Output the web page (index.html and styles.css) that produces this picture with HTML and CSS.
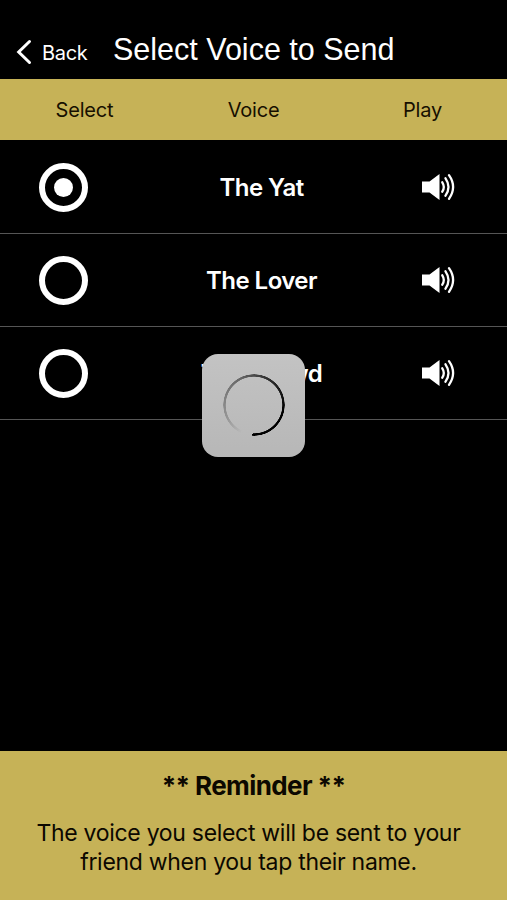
FILE: index.html
```html
<!DOCTYPE html>
<html lang="en">
<head>
<meta charset="utf-8">
<title>Select Voice to Send</title>
<link rel="stylesheet" href="styles.css">
</head>
<body>
<div class="app">
  <header class="navbar">
    <a class="back">
      <svg class="chevron" width="16" height="26" viewBox="0 0 16 26"><path d="M13.500 2.500 2.700 13 13.500 23.500"/></svg>
      <span class="back-label">Back</span>
    </a>
    <h1 class="title">Select Voice to Send</h1>
  </header>
  <div class="columns head">
    <span>Select</span><span>Voice</span><span>Play</span>
  </div>
  <main class="list">
    <div class="columns row">
      <span class="radio checked"></span>
      <span class="name">The Yat</span>
      <svg class="speaker" width="34" height="28" viewBox="0 0 34 28"><path class="cone" d="M1 8.500h7.500L18.500 1v26L8.500 19.500H1z"/><path class="wave" d="M21.300 9.300q3 4.700 0 9.400M24.500 5.300q6 8.700 0 17.400M28 2.200q8.200 11.800 0 23.600"/></svg>
    </div>
    <div class="columns row">
      <span class="radio"></span>
      <span class="name">The Lover</span>
      <svg class="speaker" width="34" height="28" viewBox="0 0 34 28"><path class="cone" d="M1 8.500h7.500L18.500 1v26L8.500 19.500H1z"/><path class="wave" d="M21.300 9.300q3 4.700 0 9.400M24.500 5.300q6 8.700 0 17.400M28 2.200q8.200 11.800 0 23.600"/></svg>
    </div>
    <div class="columns row">
      <span class="radio"></span>
      <span class="name">The Crowd</span>
      <svg class="speaker" width="34" height="28" viewBox="0 0 34 28"><path class="cone" d="M1 8.500h7.500L18.500 1v26L8.500 19.500H1z"/><path class="wave" d="M21.300 9.300q3 4.700 0 9.400M24.500 5.300q6 8.700 0 17.400M28 2.200q8.200 11.800 0 23.600"/></svg>
    </div>
  </main>
  <footer class="reminder">
    <h2 class="reminder-title">** Reminder **</h2>
    <p class="reminder-text">The voice you select will be sent to your<br>friend when you tap their name.</p>
  </footer>
  <div class="loading"><div class="ring"></div></div>
</div>
</body>
</html>
```

FILE: styles.css
```css
* { box-sizing: border-box; }
body { margin: 0; background: #000; font-family: Inter, "Liberation Sans", sans-serif; }
.app { position: relative; display: flex; flex-direction: column; height: 900px; overflow: hidden; }
.navbar { display: flex; height: 79px; padding: 20px 0 0 16px; color: #fff; }
.back { display: flex; width: 97px; padding-top: 19px; }
.chevron { flex: none; fill: none; stroke: #fff; stroke-width: 3; stroke-linecap: round; }
.back-label { margin-left: 10px; padding-top: 1px; font-size: 20px; line-height: 26px; letter-spacing: -0.3px; }
.title { margin: 0; padding-top: 12px; font: 400 30.5px/34px "Liberation Sans", Arial, sans-serif; white-space: nowrap; }
.columns { display: grid; grid-template-columns: 169px 1fr 169px; align-items: center; justify-items: center; }
.head { height: 61px; padding-top: 1px; background: #c6b257; color: #160f00; font-size: 20px; letter-spacing: -0.2px; }
.list { flex: 1; padding-top: 1px; }
.row { height: 93px; border-bottom: 1px solid #555; color: #fff; }
.radio { display: flex; align-items: center; justify-content: center; width: 49px; height: 49px; margin-right: 42px; border: 6px solid #fff; border-radius: 50%; }
.checked::after { content: ""; width: 19px; height: 19px; border-radius: 50%; background: #fff; }
.name { font-size: 24px; font-weight: 600; line-height: 30px; letter-spacing: -0.55px; margin-left: 16px; padding-top: 2px; }
.speaker { margin-left: 30px; }
.cone { fill: #fff; }
.wave { fill: none; stroke: #fff; stroke-width: 2.3; stroke-linecap: round; }
.reminder { height: 149px; padding-top: 19px; background: #c6b257; color: #0c0800; text-align: center; }
.reminder-title { margin: 0; font-size: 26px; font-weight: 700; line-height: 32px; letter-spacing: -0.6px; }
.reminder-text { margin: 17px 10px 0 0; font-size: 23px; line-height: 29px; letter-spacing: -0.3px; }
.loading { position: absolute; left: 202px; top: 354px; display: flex; align-items: center; justify-content: center; width: 103px; height: 103px; padding-bottom: 1px; border-radius: 16px; background: linear-gradient(#c3c3c3, #b7b7b7); }
.ring { width: 62px; height: 62px; border-radius: 50%; background: conic-gradient(from 183deg, #0000 0deg, #0000 22deg, #0003 60deg, #0007 150deg, #000b 200deg, #000 275deg, #000 360deg); mask: radial-gradient(circle, #0000 28px, #000 28.6px, #000 30.6px, #0000 31px); }
```
